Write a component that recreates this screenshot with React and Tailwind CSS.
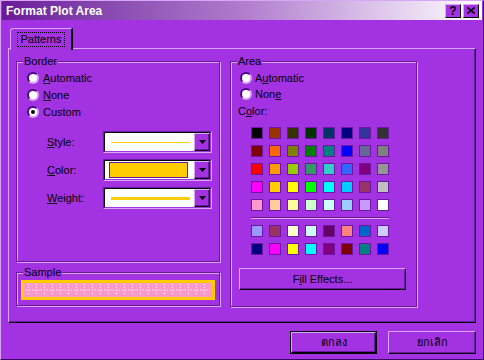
import React from "react";

const topColors = [
  ["#000000", "#993300", "#333300", "#003300", "#003366", "#000080", "#333399", "#333333"],
  ["#800000", "#ff6600", "#808000", "#008000", "#008080", "#0000ff", "#666699", "#808080"],
  ["#ff0000", "#ff9900", "#99cc00", "#339966", "#33cccc", "#3366ff", "#800080", "#969696"],
  ["#ff00ff", "#ffcc00", "#ffff00", "#00ff00", "#00ffff", "#00ccff", "#993366", "#c0c0c0"],
  ["#ff99cc", "#ffcc99", "#ffff99", "#ccffcc", "#ccffff", "#99ccff", "#cc99ff", "#ffffff"],
];

const bottomColors = [
  ["#9999ff", "#993366", "#ffffcc", "#ccffff", "#660066", "#ff8080", "#0066cc", "#ccccff"],
  ["#000080", "#ff00ff", "#ffff00", "#00ffff", "#800080", "#800000", "#008080", "#0000ff"],
];

const Radio = ({ checked }) => (
  <span className="w-[12px] h-[12px] shrink-0 rounded-full bg-white border-2 border-t-[#4a0880] border-l-[#4a0880] border-r-[#d9a6f7] border-b-[#d9a6f7] flex items-center justify-center">
    {checked && <span className="w-[4px] h-[4px] rounded-full bg-black" />}
  </span>
);

const Group = ({ label, className, children }) => (
  <div className={`relative border border-[#6a18a0] shadow-[inset_1px_1px_0_#d9a6f7,1px_1px_0_#d9a6f7] ${className}`}>
    <span className="absolute -top-[8px] left-[6px] px-[1px] bg-[#a232e2] leading-[14px]">{label}</span>
    {children}
  </div>
);

const Combo = ({ children }) => (
  <div className="w-[109px] h-[22px] flex border border-t-[#6a18a0] border-l-[#6a18a0] border-r-[#d9a6f7] border-b-[#d9a6f7]">
    <div className="flex-1 flex border border-t-black border-l-black border-r-[#a232e2] border-b-[#a232e2] bg-white">
      <div className="flex-1 flex items-center pl-[6px] pr-[4px]">{children}</div>
      <div className="w-[16px] bg-[#a232e2] border border-t-[#d9a6f7] border-l-[#d9a6f7] border-r-black border-b-black shadow-[inset_-1px_-1px_0_#6a18a0] flex items-center justify-center">
        <svg width="7" height="4" viewBox="0 0 7 4">
          <path d="M0 0H7L3.5 4Z" fill="#000" />
        </svg>
      </div>
    </div>
  </div>
);

const Swatches = ({ rows }) => (
  <div className="flex flex-col gap-[6px]">
    {rows.map((row, i) => (
      <div key={i} className="flex gap-[6px]">
        {row.map((c, j) => (
          <div key={j} className="w-[12px] h-[12px] border border-[#6a18a0]" style={{ backgroundColor: c }} />
        ))}
      </div>
    ))}
  </div>
);

const SamplePattern = () => (
  <svg width="188" height="14" className="block">
    <rect width="188" height="14" fill="#ff99cc" />
    <line x1="2" y1="7" x2="186" y2="7" stroke="#fff" strokeDasharray="1 2" />
    {Array.from({ length: 24 }).map((_, i) => (
      <line key={i} x1={4.5 + i * 8} y1="1" x2={4.5 + i * 8} y2="13" stroke="#fff" strokeDasharray="1 2" />
    ))}
  </svg>
);

const Button = ({ children, isDefault, className }) => (
  <div className={`${isDefault ? "border border-black" : ""} ${className}`}>
    <div className="h-full border border-t-[#d9a6f7] border-l-[#d9a6f7] border-r-black border-b-black shadow-[inset_-1px_-1px_0_#6a18a0] flex items-center justify-center">
      {children}
    </div>
  </div>
);

export default function App() {
  return (
    <div className="w-[484px] h-[360px] flex flex-col bg-[#a232e2] border border-t-[#d9a6f7] border-l-[#d9a6f7] border-r-[#3a0868] border-b-[#3a0868] text-[11px] text-black font-['Liberation_Sans','DejaVu_Sans',sans-serif] overflow-hidden">
      {/* title bar */}
      <div className="h-[19px] mx-[1px] flex items-center justify-between bg-linear-to-r from-[#6a1898] via-[#b07ccc] to-white">
        <span className="pl-[4px] text-white font-bold text-[12px]">Format Plot Area</span>
        <div className="flex gap-[2px] pr-[3px]">
          <div className="w-[16px] h-[14px] bg-[#a232e2] border border-t-[#d9a6f7] border-l-[#d9a6f7] border-r-black border-b-black flex items-center justify-center font-bold text-[12px] leading-none">?</div>
          <div className="w-[16px] h-[14px] bg-[#a232e2] border border-t-[#d9a6f7] border-l-[#d9a6f7] border-r-black border-b-black flex items-center justify-center">
            <svg width="8" height="7" viewBox="0 0 8 7">
              <path d="M0.5 0.5L7.5 6.5M7.5 0.5L0.5 6.5" stroke="#000" strokeWidth="1.6" />
            </svg>
          </div>
        </div>
      </div>

      {/* tab */}
      <div className="mt-[8px] ml-[9px] w-[63px] h-[22px] relative z-10 bg-[#a232e2] rounded-tl-[3px] border-t border-l border-t-[#d9a6f7] border-l-[#d9a6f7] border-r-2 border-r-black flex items-start justify-center pt-[3px]">
        <span className="border border-dotted border-black px-[3px] leading-[13px]">Patterns</span>
      </div>

      {/* panel */}
      <div className="-mt-[2px] ml-[7px] w-[468px] h-[275px] border border-t-[#d9a6f7] border-l-[#d9a6f7] border-r-black border-b-black shadow-[inset_-1px_-1px_0_#6a18a0] flex gap-[10px] pl-[7px] pt-[12px]">
        <div className="w-[204px] flex flex-col gap-[10px]">
          <Group label="Border" className="h-[201px] pt-[8px]">
            <div className="flex flex-col gap-[1px] pl-[10px]">
              <div className="h-[16px] flex items-center gap-[4px]"><Radio /><span><span className="underline">A</span>utomatic</span></div>
              <div className="h-[16px] flex items-center gap-[4px]"><Radio /><span><span className="underline">N</span>one</span></div>
              <div className="h-[16px] flex items-center gap-[4px]"><Radio checked /><span>Custom</span></div>
            </div>
            <div className="mt-[11px] flex flex-col gap-[6px] pl-[30px]">
              <div className="flex items-center">
                <span className="w-[56px]"><span className="underline">S</span>tyle:</span>
                <Combo><div className="w-full h-[1px] bg-[#ffcc00]" /></Combo>
              </div>
              <div className="flex items-center">
                <span className="w-[56px]"><span className="underline">C</span>olor:</span>
                <Combo><div className="w-full h-[16px] -ml-[2px] bg-[#ffcc00] border border-[#6a18a0]" /></Combo>
              </div>
              <div className="flex items-center">
                <span className="w-[56px]"><span className="underline">W</span>eight:</span>
                <Combo><div className="w-full h-[3px] bg-[#ffcc00]" /></Combo>
              </div>
            </div>
          </Group>
          <Group label="Sample" className="h-[34px] pl-[4px] pt-[7px]">
            <div className="w-[194px] h-[20px] border-[3px] border-[#ffcc00]">
              <SamplePattern />
            </div>
          </Group>
        </div>

        <Group label="Area" className="w-[187px] h-[246px]">
          <div className="pt-[8px] pl-[9px] flex flex-col">
            <div className="h-[16px] flex items-center gap-[3px]"><Radio /><span>A<span className="underline">u</span>tomatic</span></div>
            <div className="h-[16px] flex items-center gap-[3px]"><Radio /><span>Non<span className="underline">e</span></span></div>
          </div>
          <div className="pl-[7px] mt-[1px] leading-[16px]">C<span className="underline">o</span>lor:</div>
          <div className="pl-[20px] mt-[8px]">
            <Swatches rows={topColors} />
            <div className="w-[138px] my-[6px] border-t border-t-[#6a18a0] border-b border-b-[#d9a6f7]" />
            <Swatches rows={bottomColors} />
          </div>
          <Button className="mt-[13px] ml-[8px] w-[167px] h-[22px]">
            <span>F<span className="underline">i</span>ll Effects...</span>
          </Button>
        </Group>
      </div>

      {/* dialog buttons */}
      <div className="mt-[8px] flex justify-end gap-[11px] pr-[7px]">
        <Button isDefault className="w-[87px] h-[23px]">ตกลง</Button>
        <Button className="w-[88px] h-[23px]">ยกเลิก</Button>
      </div>
    </div>
  );
}
